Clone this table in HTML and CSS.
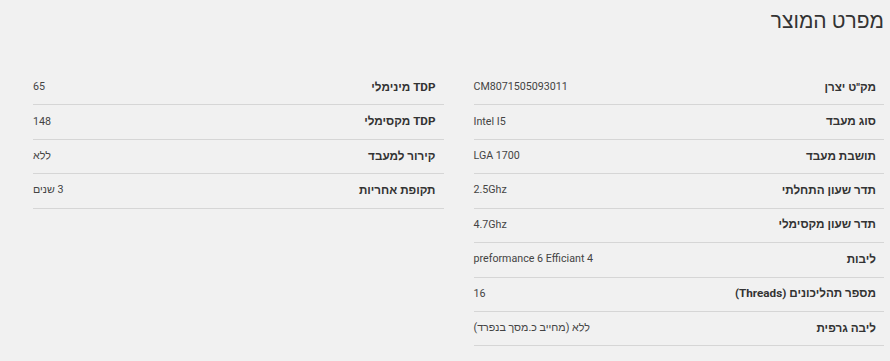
FILE: index.html
```html
<!DOCTYPE html>
<html lang="he" dir="rtl">
<head>
<meta charset="utf-8">
<title>מפרט המוצר</title>
<link rel="stylesheet" href="styles.css">
</head>
<body>
<section class="specs">
  <h2 class="specs-title">מפרט המוצר</h2>
  <div class="specs-grid">
    <div class="spec-list">
      <div class="spec-row"><span class="spec-label">מק"ט יצרן</span><span class="spec-value">CM8071505093011</span></div>
      <div class="spec-row"><span class="spec-label">סוג מעבד</span><span class="spec-value">Intel I5</span></div>
      <div class="spec-row"><span class="spec-label">תושבת מעבד</span><span class="spec-value">LGA 1700</span></div>
      <div class="spec-row"><span class="spec-label">תדר שעון התחלתי</span><span class="spec-value">2.5Ghz</span></div>
      <div class="spec-row"><span class="spec-label">תדר שעון מקסימלי</span><span class="spec-value">4.7Ghz</span></div>
      <div class="spec-row"><span class="spec-label">ליבות</span><span class="spec-value">preformance 6 Efficiant 4</span></div>
      <div class="spec-row"><span class="spec-label">מספר תהליכונים (Threads)</span><span class="spec-value">16</span></div>
      <div class="spec-row"><span class="spec-label">ליבה גרפית</span><span class="spec-value">ללא (מחייב כ.מסך בנפרד)</span></div>
    </div>
    <div class="spec-list">
      <div class="spec-row"><span class="spec-label">TDP מינימלי</span><span class="spec-value">65</span></div>
      <div class="spec-row"><span class="spec-label">TDP מקסימלי</span><span class="spec-value">148</span></div>
      <div class="spec-row"><span class="spec-label">קירור למעבד</span><span class="spec-value">ללא</span></div>
      <div class="spec-row"><span class="spec-label">תקופת אחריות</span><span class="spec-value">3 שנים</span></div>
    </div>
  </div>
</section>
</body>
</html>
```
FILE: styles.css
```css
html, body {
  margin: 0;
  background: #f1f1f1;
}

body {
  font-family: Roboto, "Liberation Sans", Arial, sans-serif;
  color: #333;
}

.specs {
  padding: 7px 6px 0 33px;
}

.specs-title {
  margin: 0;
  font-size: 21px;
  font-weight: 400;
  line-height: 28px;
  color: #333;
}

.specs-grid {
  margin-top: 36px;
  display: grid;
  grid-template-columns: 1fr 1fr;
  column-gap: 30px;
  align-items: start;
}

.spec-row {
  display: flex;
  justify-content: space-between;
  align-items: center;
  height: 34.43px;
  box-sizing: border-box;
  padding: 0 8px 2px 0;
  border-bottom: 1px solid #d6d6d6;
}

.spec-label {
  font-size: 11.7px;
  font-weight: 700;
  color: #333;
}

.spec-value {
  font-size: 10.7px;
  color: #444;
}
```
